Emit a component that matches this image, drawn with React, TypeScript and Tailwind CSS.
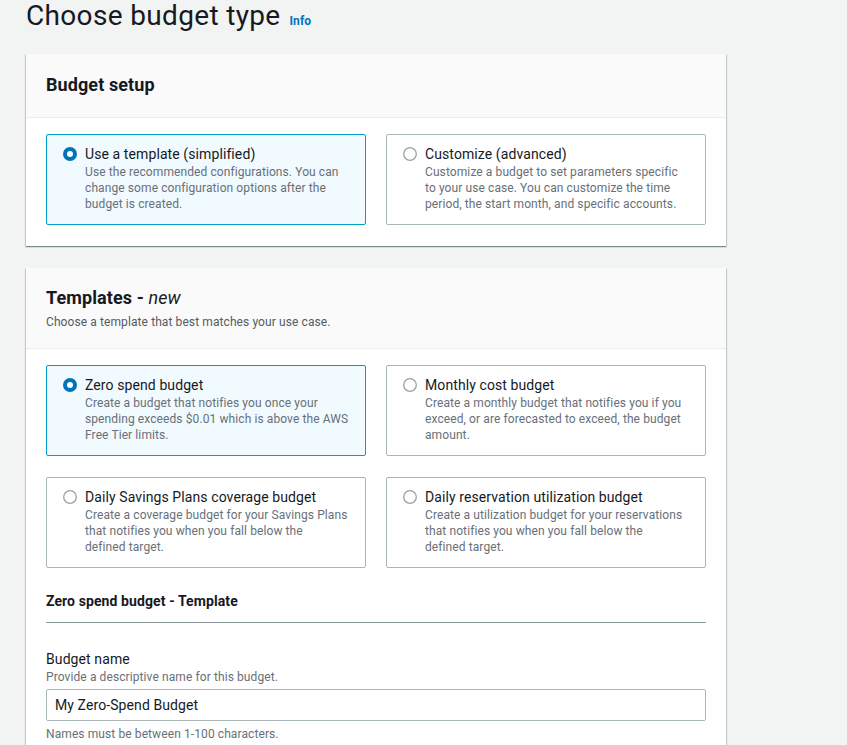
import React from 'react';

type Option = {
  title: string;
  lines: string[];
  selected?: boolean;
};

const setupOptions: Option[] = [
  {
    title: 'Use a template (simplified)',
    lines: [
      'Use the recommended configurations. You can',
      'change some configuration options after the',
      'budget is created.',
    ],
    selected: true,
  },
  {
    title: 'Customize (advanced)',
    lines: [
      'Customize a budget to set parameters specific',
      'to your use case. You can customize the time',
      'period, the start month, and specific accounts.',
    ],
  },
];

const templateOptions: Option[] = [
  {
    title: 'Zero spend budget',
    lines: [
      'Create a budget that notifies you once your',
      'spending exceeds $0.01 which is above the AWS',
      'Free Tier limits.',
    ],
    selected: true,
  },
  {
    title: 'Monthly cost budget',
    lines: [
      'Create a monthly budget that notifies you if you',
      'exceed, or are forecasted to exceed, the budget',
      'amount.',
    ],
  },
  {
    title: 'Daily Savings Plans coverage budget',
    lines: [
      'Create a coverage budget for your Savings Plans',
      'that notifies you when you fall below the',
      'defined target.',
    ],
  },
  {
    title: 'Daily reservation utilization budget',
    lines: [
      'Create a utilization budget for your reservations',
      'that notifies you when you fall below the',
      'defined target.',
    ],
  },
];

const Radio = ({ checked }: { checked?: boolean }) => (
  <svg width="14" height="14" viewBox="0 0 14 14" className="mt-[3px] shrink-0">
    {checked ? (
      <>
        <circle cx="7" cy="7" r="7" fill="#0073bb" />
        <circle cx="7" cy="7" r="3" fill="#ffffff" />
      </>
    ) : (
      <circle cx="7" cy="7" r="6.3" fill="#ffffff" stroke="#98a2a4" strokeWidth="1.3" />
    )}
  </svg>
);

const Tile = ({ option }: { option: Option }) => (
  <div
    className={
      option.selected
        ? 'flex gap-2 rounded-[2px] border border-[#00a1c9] bg-[#f1faff] pl-[16px] pr-[10px] pt-[9px] pb-[12px]'
        : 'flex gap-2 rounded-[2px] border border-[#aab7b8] bg-white pl-[16px] pr-[10px] pt-[9px] pb-[12px]'
    }
  >
    <Radio checked={option.selected} />
    <div className="min-w-0">
      <div className="text-[14px] leading-[20px] text-[#16191f]">{option.title}</div>
      <div className="text-[12px] leading-[16px] whitespace-nowrap text-[#687078]">
        {option.lines.map((l) => (
          <div key={l}>{l}</div>
        ))}
      </div>
    </div>
  </div>
);

const cardShadow =
  'shadow-[0_1px_1px_0_rgba(0,28,36,0.3),1px_1px_1px_0_rgba(0,28,36,0.15),-1px_1px_1px_0_rgba(0,28,36,0.15)]';

export default function App() {
  return (
    <div className="min-h-[745px] bg-[#f2f3f3] font-['Roboto',sans-serif] tracking-[0.006em] text-[#16191f]">
      <div className="ml-[26px] w-[700px]">
        <h1 className="flex items-baseline text-[28px] leading-[32px] font-normal">
          <span className="tracking-[0.012em]">Choose budget type</span>
          <span className="ml-[9px] text-[12px] leading-[16px] font-bold text-[#0073bb]">Info</span>
        </h1>

        <div className={`mt-[22px] bg-white ${cardShadow}`}>
          <div className="border-b border-[#eaeded] bg-[#fafafa] px-[20px] pt-[20px] pb-[21px]">
            <h2 className="text-[18px] leading-[22px] font-bold">Budget setup</h2>
          </div>
          <div className="grid grid-cols-2 gap-[20px] px-[20px] pt-[16px] pb-[21px]">
            {setupOptions.map((o) => (
              <Tile key={o.title} option={o} />
            ))}
          </div>
        </div>

        <div className={`mt-[22px] bg-white ${cardShadow}`}>
          <div className="border-b border-[#eaeded] bg-[#fafafa] px-[20px] pt-[19px] pb-[18px]">
            <h2 className="text-[18px] leading-[22px] font-bold">
              Templates - <em className="font-normal">new</em>
            </h2>
            <p className="mt-[5px] text-[12px] leading-[16px] text-[#545b64]">
              Choose a template that best matches your use case.
            </p>
          </div>
          <div className="px-[20px] pt-[16px] pb-[20px]">
            <div className="grid grid-cols-2 gap-x-[20px] gap-y-[21px]">
              {templateOptions.map((o) => (
                <Tile key={o.title} option={o} />
              ))}
            </div>

            <h3 className="mt-[23px] border-b border-[#879596] pb-[11px] text-[14px] leading-[20px] font-bold">
              Zero spend budget - Template
            </h3>

            <div className="mt-[26px]">
              <label className="block text-[14px] leading-[20px]">Budget name</label>
              <p className="text-[12px] leading-[16px] text-[#687078]">
                Provide a descriptive name for this budget.
              </p>
              <input
                type="text"
                defaultValue="My Zero-Spend Budget"
                className="mt-[4px] block h-[32px] w-full rounded-[2px] border border-[#aab7b8] bg-white px-[8px] text-[14px] text-[#16191f] outline-none"
              />
              <p className="mt-[5px] text-[12px] leading-[16px] text-[#687078]">
                Names must be between 1-100 characters.
              </p>
            </div>
          </div>
        </div>
      </div>
    </div>
  );
}
